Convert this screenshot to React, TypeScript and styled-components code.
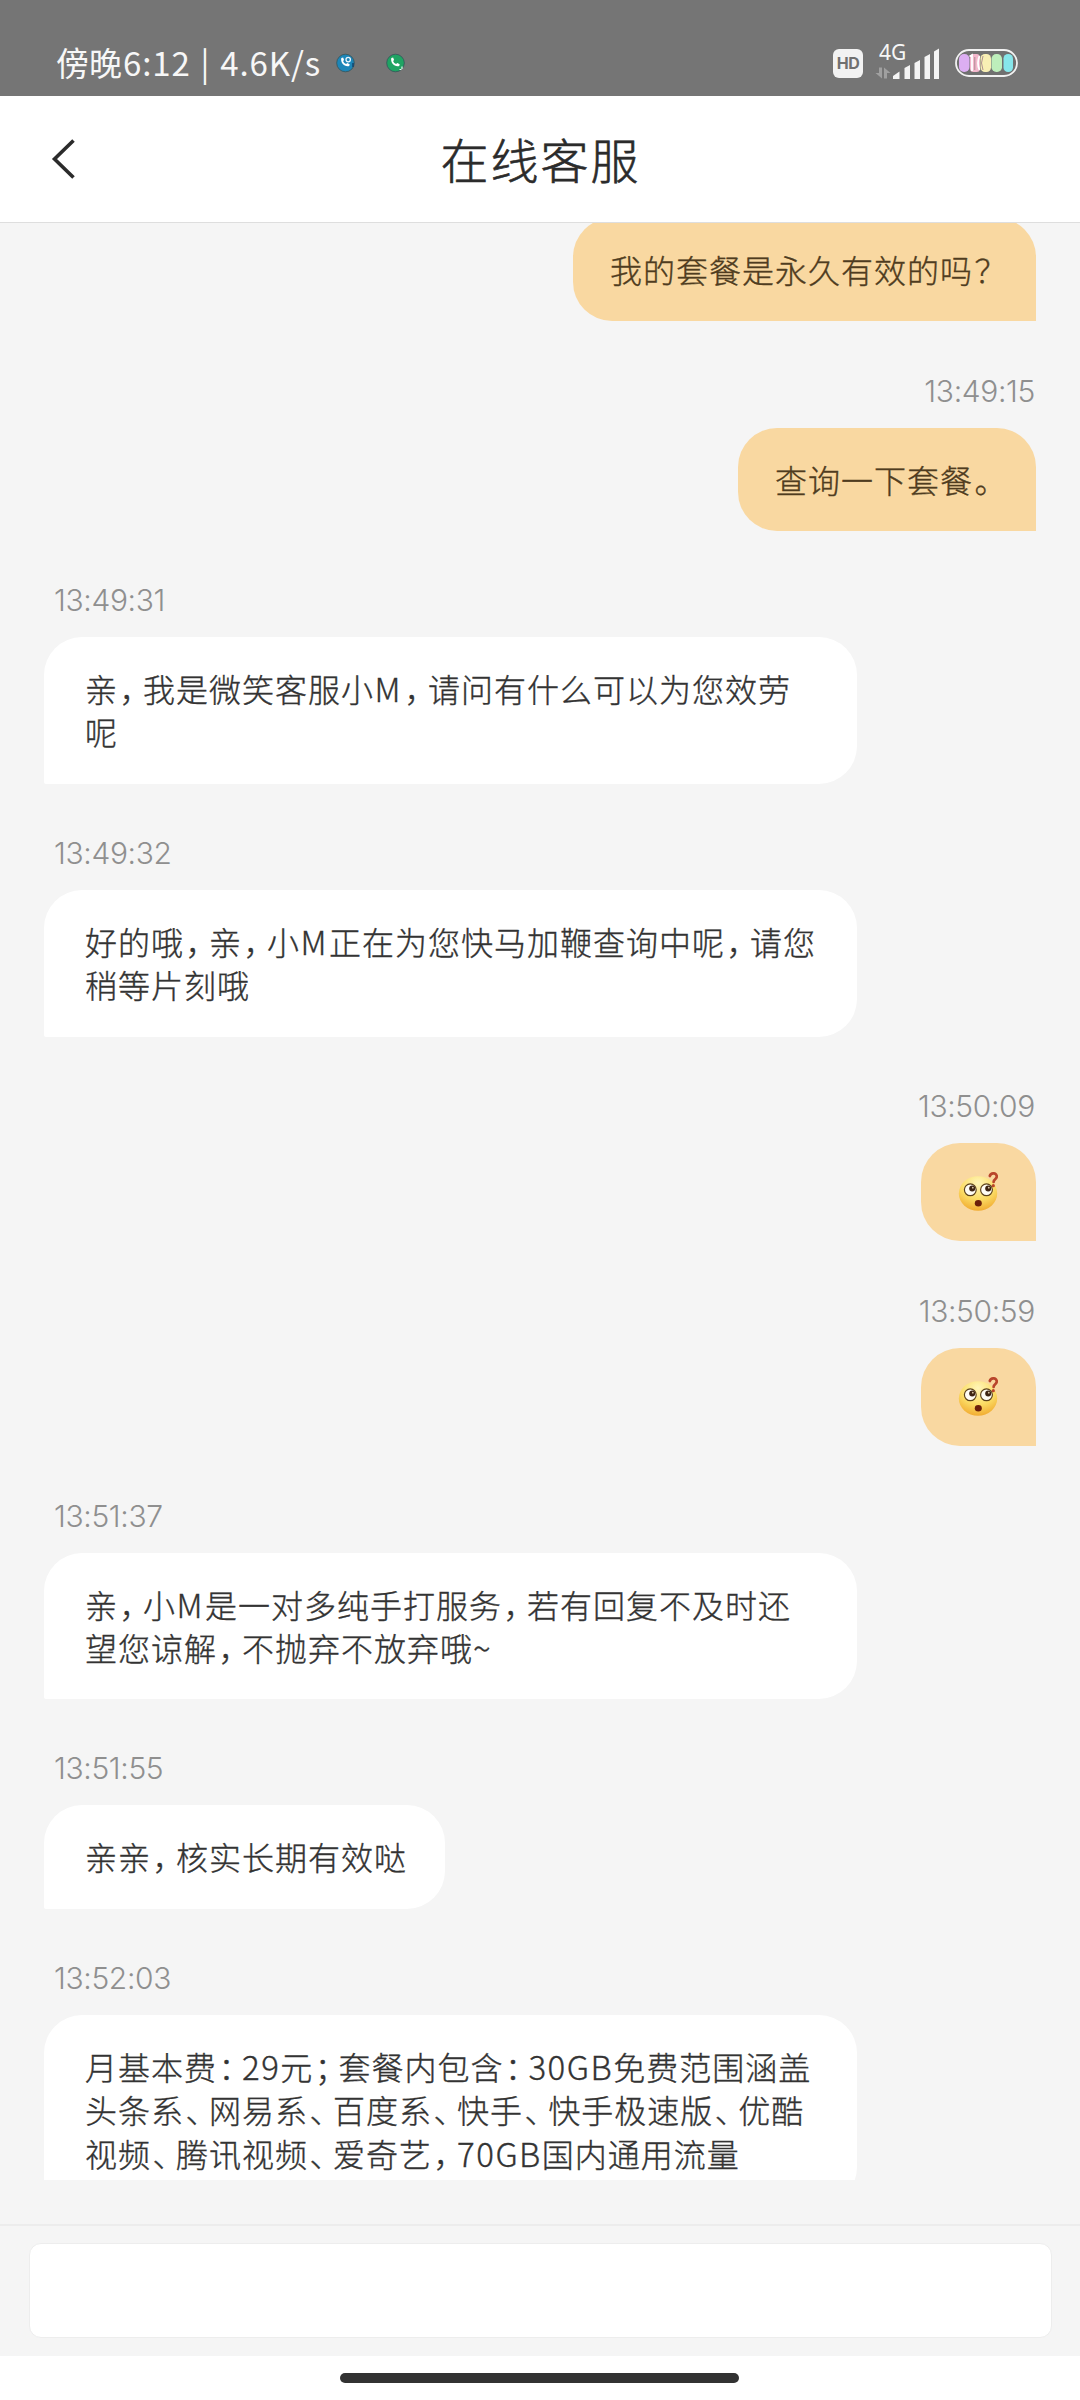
import React from "react";
import styled, { createGlobalStyle } from "styled-components";

const GlobalStyle = createGlobalStyle`
  * { box-sizing: border-box; }
  body {
    margin: 0;
    background: #fff;
    font-family: "Noto Sans CJK SC", sans-serif;
    font-weight: 300;
  }
`;

const Screen = styled.div`
  width: 1080px;
  height: 2400px;
  display: flex;
  flex-direction: column;
  overflow: hidden;
  background: #f5f5f5;
`;

const StatusBar = styled.header`
  height: 96px;
  flex: none;
  display: flex;
  align-items: flex-start;
  background: #757575;
  color: #f7f7f7;
  padding: 0 62px 0 56px;
`;

const Clock = styled.div`
  width: 280px;
  padding-top: 40px;
  font-size: 33px;
  line-height: 44px;
  font-weight: 400;
  white-space: pre;
`;

const ClockLatin = styled.span`
  margin-left: 1px;
  letter-spacing: 0.9px;
  word-spacing: 1.6px;
`;

const Notices = styled.div`
  display: flex;
  gap: 30px;
  padding-top: 53px;
`;

const StatusRight = styled.div`
  margin-left: auto;
  display: flex;
  padding-top: 43px;
`;

const HdBadge = styled.div`
  width: 30px;
  height: 29px;
  margin-top: 6px;
  border-radius: 6px;
  background: #f2f2f2;
  color: #707070;
  font: 700 16px/29px "Inter", sans-serif;
  letter-spacing: -0.4px;
  text-align: center;
`;

const Network = styled.div`
  width: 69px;
  margin-left: 12px;
  display: grid;
  grid-template-columns: 20px 1fr;
  height: 37px;
`;

const NetworkLabel = styled.span`
  grid-area: 1 / 1;
  padding-left: 4px;
  font: 400 21px/18px "Noto Sans", sans-serif;
  white-space: nowrap;
`;

const NetworkArt = styled.svg`
  grid-area: 1 / 1 / 2 / 3;
  width: 64px;
  height: 37px;
`;

const Battery = styled.svg`
  width: 63px;
  height: 28px;
  margin: 6px 0 0 11px;
`;

const TitleBar = styled.div`
  height: 127px;
  flex: none;
  display: grid;
  grid-template-columns: 120px 1fr 120px;
  align-items: center;
  background: #fff;
  border-bottom: 1px solid #dedede;
`;

const BackButton = styled.button`
  border: 0;
  background: none;
  padding: 0 0 0 51px;
  display: flex;
`;

const Title = styled.h1`
  margin: 0;
  padding: 0 0 3px 1px;
  font-size: 48px;
  line-height: 60px;
  font-weight: 300;
  letter-spacing: 2px;
  text-align: center;
  color: #2b2b2b;
  -webkit-text-stroke: 0.6px #2b2b2b;
`;

const Messages = styled.main`
  height: 1957px;
  flex: none;
  display: flex;
  flex-direction: column;
  overflow: hidden;
  padding: 0 44px;
`;

const Row = styled.section<{ $mine?: boolean; $first?: boolean }>`
  flex: none;
  display: flex;
  flex-direction: column;
  align-items: ${(p) => (p.$mine ? "flex-end" : "flex-start")};
  margin-top: ${(p) => (p.$first ? "-5px" : "48.3px")};
`;

const Time = styled.time`
  height: 42px;
  margin: 0 0 16px;
  padding: 0 1px 0 10px;
  font: 300 30px/42px "Inter", sans-serif;
  letter-spacing: -0.35px;
  color: #8f8f8f;
`;

const Bubble = styled.div<{ $mine?: boolean }>`
  padding: ${(p) => (p.$mine ? "30px 38px 30px 37px" : "30px 38px 30px 41px")};
  max-width: 813px;
  border-radius: ${(p) => (p.$mine ? "39px 39px 0 39px" : "38px 38px 38px 2px")};
  background: ${(p) => (p.$mine ? "#f9d8a1" : "#fff")};
  color: ${(p) => (p.$mine ? "#4f3c20" : "#333")};
  font-size: 32px;
  line-height: 43.3px;
  letter-spacing: 1px;
  -webkit-text-stroke: 0.35px currentColor;
`;

const Line = styled.div`
  white-space: pre;
  height: 43.3px;
`;

const NarrowMark = styled.span`
  margin-left: 1.5px;
  letter-spacing: -8.5px;
`;

const Latin = styled.span<{ $letter?: boolean }>`
  letter-spacing: ${(p) => (p.$letter ? "2.4px" : "1.5px")};
  font-size: 33px;
  margin-left: ${(p) => (p.$letter ? "0.5px" : "0")};
`;

const EmojiBubble = styled(Bubble)`
  width: 115px;
  height: 98.5px;
  padding: 28px 0 0 36px;
`;

const Composer = styled.footer`
  height: 176px;
  margin-top: 44px;
  flex: none;
  display: flex;
  flex-direction: column;
  border-top: 2px solid #ececec;
`;

const InputWrap = styled.div`
  height: 130px;
  padding: 17px 28px 0 29px;
`;

const Input = styled.div`
  height: 95px;
  border-radius: 12px;
  background: #fff;
  border: 1px solid #ededed;
`;

const HomeArea = styled.div`
  flex: 1;
  background: #fff;
  display: flex;
  justify-content: center;
  padding: 17px 2px 0 0;
`;

const HomeBar = styled.div`
  width: 399px;
  height: 10px;
  border-radius: 5px;
  background: #323232;
`;

const PhoneGlyph = () => (
  <path
    d="M5.3 4.9 7.1 4.5 8.1 7 7.1 8.1C7.7 9.6 8.7 10.6 10.1 11.1L11.3 10.1 13.7 11.2 13.2 13C8.5 14.2 4.2 9.5 5.3 4.9Z"
    fill="#fff"
  />
);

function NoticeIcon({ color, record }: { color: string; record?: boolean }) {
  return (
    <svg width="20" height="20" viewBox="0 0 20 20">
      <circle cx="9.5" cy="10" r="8.8" fill={color} stroke="#35545a" strokeWidth="0.8" />
      <PhoneGlyph />
      {record ? (
        <>
          <circle cx="12.2" cy="6.6" r="2.2" fill="none" stroke="#e9f6ff" strokeWidth="1.3" />
          <path d="M17 10v4" stroke="#14436c" strokeWidth="1.5" />
        </>
      ) : (
        <path d="M16 13.5v2.5M13.5 16.5h2" stroke="#e4fff0" strokeWidth="1.2" />
      )}
    </svg>
  );
}

function SignalArt() {
  return (
    <NetworkArt viewBox="0 0 64 37">
      <g fill="#a0a0a0">
        <path d="M7 24.5V35.500L0.500 30H4V24.500z" />
        <path d="M9 35.500V24.500L15.500 30H12v5.500z" />
      </g>
      <g fill="#f4f4f4">
        <path d="M18 36v-3l6.500-4.500V36z" />
        <path d="M29.500 36V25l5.500-3V36z" />
        <path d="M39.500 36V20l5.500-3V36z" />
        <path d="M49.500 36V14l5.500-3V36z" />
        <path d="M59 36V8.500L64 5.500V36z" />
      </g>
    </NetworkArt>
  );
}

function BatteryArt() {
  return (
    <Battery viewBox="0 0 63 28">
      <rect x="1" y="1" width="61" height="26" rx="13" fill="#707070" stroke="#f2f2f2" strokeWidth="1.8" />
      <rect x="4" y="5" width="10.5" height="18" rx="5" fill="#dcaef2" />
      <rect x="15" y="5" width="10" height="18" rx="3.5" fill="#f3b7cc" />
      <rect x="25.5" y="5" width="10.5" height="18" rx="4.5" fill="#f8efb4" />
      <rect x="36.5" y="5" width="10.5" height="18" rx="4.8" fill="#bdeebb" />
      <rect x="48.5" y="5" width="9.5" height="18" rx="4.6" fill="#86e6ea" />
      <path d="M14.500 7.500l2.500-1.500V22M24.500 7q-3 7 0 14" fill="none" stroke="#fff" strokeWidth="1.8" />
      <path d="M19.800 8v13M28 7q-3 7 0 14" fill="none" stroke="#a5868c" strokeWidth="0.9" />
    </Battery>
  );
}

function WonderingFace() {
  return (
    <svg width="44" height="42" viewBox="0 0 44 42">
      <defs>
        <radialGradient id="skin" cx="0.5" cy="0.2" r="0.85">
          <stop offset="0" stopColor="#fff5b8" />
          <stop offset="0.55" stopColor="#fbdc65" />
          <stop offset="1" stopColor="#f0a52a" />
        </radialGradient>
      </defs>
      <ellipse cx="21" cy="22.5" rx="19.2" ry="17.3" fill="url(#skin)" />
      <g fill="#fffdf4" stroke="#5d431c" strokeWidth="1.2">
        <circle cx="13.3" cy="18.8" r="5.9" />
        <circle cx="29.5" cy="18.8" r="5.9" />
      </g>
      <circle cx="15.2" cy="17.6" r="3" fill="#3d2413" />
      <circle cx="31.2" cy="17.6" r="3" fill="#3d2413" />
      <circle cx="15.8" cy="16.7" r="0.9" fill="#d9c7a5" />
      <circle cx="31.8" cy="16.7" r="0.9" fill="#d9c7a5" />
      <ellipse cx="21.3" cy="32.3" rx="3.5" ry="3.3" fill="#6b1f0a" />
      <path
        d="M32.800 5C34 1 40.500 1.800 39.700 6.100C39.300 8.300 36.500 8.300 36.600 11"
        fill="none"
        stroke="#b9452b"
        strokeWidth="2.7"
        strokeLinecap="round"
      />
      <circle cx="36.3" cy="14.7" r="1.6" fill="#b9452b" />
    </svg>
  );
}

function RichLine({ text }: { text: string }) {
  const parts = text.split(/([，：；、。？]|[A-Za-z0-9~]+)/).filter(Boolean);
  return (
    <Line>
      {parts.map((part, i) => {
        if (/^[，：；、。？]$/.test(part)) return <NarrowMark key={i}>{part}</NarrowMark>;
        if (/^[A-Za-z0-9~]+$/.test(part))
          return (
            <Latin key={i} $letter={part === "M"}>
              {part}
            </Latin>
          );
        return <React.Fragment key={i}>{part}</React.Fragment>;
      })}
    </Line>
  );
}

type Message = { time?: string; mine?: boolean; emoji?: boolean; lines?: string[] };

const messages: Message[] = [
  { mine: true, lines: ["我的套餐是永久有效的吗？"] },
  { time: "13:49:15", mine: true, lines: ["查询一下套餐。"] },
  { time: "13:49:31", lines: ["亲，我是微笑客服小M，请问有什么可以为您效劳", "呢"] },
  { time: "13:49:32", lines: ["好的哦，亲，小M正在为您快马加鞭查询中呢，请您", "稍等片刻哦"] },
  { time: "13:50:09", mine: true, emoji: true },
  { time: "13:50:59", mine: true, emoji: true },
  { time: "13:51:37", lines: ["亲，小M是一对多纯手打服务，若有回复不及时还", "望您谅解，不抛弃不放弃哦~"] },
  { time: "13:51:55", lines: ["亲亲，核实长期有效哒"] },
  {
    time: "13:52:03",
    lines: [
      "月基本费：29元；套餐内包含：30GB免费范围涵盖",
      "头条系、网易系、百度系、快手、快手极速版、优酷",
      "视频、腾讯视频、爱奇艺，70GB国内通用流量",
    ],
  },
];

const WideBubble = styled(Bubble)`
  width: 813px;
`;

function MessageRow({ message, first }: { message: Message; first: boolean }) {
  const { time, mine, emoji, lines = [] } = message;
  const Box = lines.length > 1 ? WideBubble : Bubble;
  return (
    <Row $mine={mine} $first={first}>
      {time && <Time>{time}</Time>}
      {emoji ? (
        <EmojiBubble $mine>
          <WonderingFace />
        </EmojiBubble>
      ) : (
        <Box $mine={mine}>
          {lines.map((line) => (
            <RichLine key={line} text={line} />
          ))}
        </Box>
      )}
    </Row>
  );
}

export default function App() {
  return (
    <Screen>
      <GlobalStyle />
      <StatusBar>
        <Clock>
          傍晚<ClockLatin>6:12 | 4.6K/s</ClockLatin>
        </Clock>
        <Notices>
          <NoticeIcon color="#1d86b8" record />
          <NoticeIcon color="#1fa463" />
        </Notices>
        <StatusRight>
          <HdBadge>HD</HdBadge>
          <Network>
            <NetworkLabel>4G</NetworkLabel>
            <SignalArt />
          </Network>
          <BatteryArt />
        </StatusRight>
      </StatusBar>
      <TitleBar>
        <BackButton aria-label="返回">
          <svg width="26" height="42" viewBox="0 0 26 42">
            <path d="M22.5 2.5 3.5 21l19 18.5" fill="none" stroke="#2b2b2b" strokeWidth="3.6" />
          </svg>
        </BackButton>
        <Title>在线客服</Title>
      </TitleBar>
      <Messages>
        {messages.map((message, i) => (
          <MessageRow key={i} message={message} first={i === 0} />
        ))}
      </Messages>
      <Composer>
        <InputWrap>
          <Input />
        </InputWrap>
        <HomeArea>
          <HomeBar />
        </HomeArea>
      </Composer>
    </Screen>
  );
}
